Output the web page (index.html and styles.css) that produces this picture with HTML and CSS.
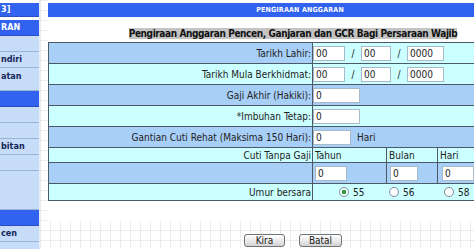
FILE: index.html
```html
<!DOCTYPE html>
<html lang="ms">
<head>
    <meta charset="UTF-8">
    <title>Pengiraan Anggaran</title>
    <link rel="stylesheet" href="styles.css">
</head>
<body>
    <div class="page">
        <div class="sidebar">
            <div class="nav-item nav-head first">3]</div>
            <div class="nav-item nav-head">RAN</div>
            <div class="nav-item"></div>
            <div class="nav-item">ndiri</div>
            <div class="nav-item tall">atan</div>
            <div class="nav-item nav-head"></div>
            <div class="nav-item"></div>
            <div class="nav-item"></div>
            <div class="nav-item">bitan</div>
            <div class="nav-item"></div>
            <div class="nav-item taller"></div>
            <div class="nav-item nav-head"></div>
            <div class="nav-item">cen</div>
            <div class="nav-item"></div>
        </div>

        <div class="content">
            <div class="panel">
                <div class="bar">PENGIRAAN ANGGARAN</div>
                <div class="title"><span>Pengiraan Anggaran Pencen, Ganjaran dan GCR Bagi Persaraan Wajib</span></div>

                <table class="form">
                    <colgroup>
                        <col class="col-label">
                        <col class="col-a">
                        <col class="col-b">
                        <col class="col-c">
                    </colgroup>
                    <tr class="row-dark-label">
                        <td class="label">Tarikh Lahir:</td>
                        <td colspan="3" class="value">
                            <input class="field w32" value="00"><span class="slash">/</span><input class="field w30" value="00"><span class="slash">/</span><input class="field w37" value="0000">
                        </td>
                    </tr>
                    <tr class="row-light">
                        <td class="label">Tarikh Mula Berkhidmat:</td>
                        <td colspan="3" class="value">
                            <input class="field w32" value="00"><span class="slash">/</span><input class="field w30" value="00"><span class="slash">/</span><input class="field w37" value="0000">
                        </td>
                    </tr>
                    <tr class="row-dark">
                        <td class="label">Gaji Akhir (Hakiki):</td>
                        <td colspan="3" class="value"><input class="field w47" value="0"></td>
                    </tr>
                    <tr class="row-light">
                        <td class="label">*Imbuhan Tetap:</td>
                        <td colspan="3" class="value"><input class="field w47" value="0"></td>
                    </tr>
                    <tr class="row-dark">
                        <td class="label">Gantian Cuti Rehat (Maksima 150 Hari):</td>
                        <td colspan="3" class="value"><input class="field w38" value="0"><span class="unit">Hari</span></td>
                    </tr>
                    <tr class="row-light short">
                        <td class="label">Cuti Tanpa Gaji</td>
                        <td class="sub">Tahun</td>
                        <td class="sub">Bulan</td>
                        <td class="sub">Hari</td>
                    </tr>
                    <tr class="row-dark">
                        <td class="label"></td>
                        <td class="sub"><input class="field w32" value="0"></td>
                        <td class="sub pad3"><input class="field w28" value="0"></td>
                        <td class="sub pad4"><input class="field w32" value="0"></td>
                    </tr>
                    <tr class="row-light radios">
                        <td class="label">Umur bersara</td>
                        <td colspan="3">
                            <div class="choices">
                                <label class="choice wide50"><input type="radio" name="umur" checked>55</label>
                                <label class="choice wide55"><input type="radio" name="umur">56</label>
                                <label class="choice"><input type="radio" name="umur">58</label>
                            </div>
                        </td>
                    </tr>
                </table>
            </div>

            <div class="actions">
                <button class="btn kira">Kira</button>
                <button class="btn batal">Batal</button>
            </div>
        </div>
    </div>
</body>
</html>
```

FILE: styles.css
```css
:root {
    --head-blue: #3162f0;
    --side-light: #c6dcf8;
    --row-dark: #a8cff8;
    --row-light: #ccffff;
    --rule: #4c5a68;
}

html,
body {
    margin: 0;
    padding: 0;
    overflow: hidden;
}

body {
    background-color: #ffffff;
    background-image:
        linear-gradient(#ececec 1px, transparent 1px),
        linear-gradient(90deg, #ececec 1px, transparent 1px);
    background-size: 10px 10px;
    font-family: "DejaVu Sans Condensed", "Liberation Sans", sans-serif;
    font-size: 10px;
    color: #222222;
}

.page {
    display: flex;
    align-items: flex-start;
    width: 560px;
}

/* left menu, scrolled off to the left */
.sidebar {
    width: 39px;
    flex-shrink: 0;
    border-right: 1px solid #e8eef8;
    background: #ffffff;
    padding-top: 3px;
}

.nav-item {
    height: 15px;
    line-height: 15px;
    border-bottom: 1px solid #9cb4d4;
    background: var(--side-light);
    color: #13265a;
    font-size: 9px;
    font-weight: bold;
    white-space: nowrap;
    overflow: hidden;
    padding-left: 1px;
}

.nav-head {
    background: var(--head-blue);
    color: #ffffff;
    border-bottom-color: #2a4fc0;
}

.nav-head.first {
    height: 13px;
    line-height: 13px;
    margin-bottom: 3px;
}

.nav-item.tall {
    height: 22px;
    line-height: 17px;
}

.nav-item.taller {
    height: 38px;
}

.content {
    margin-left: 8px;
}

.panel {
    width: 490px;
    background: #ffffff;
    padding-top: 3px;
    padding-bottom: 20px;
}

.bar {
    height: 14px;
    line-height: 14px;
    background: var(--head-blue);
    color: #ffffff;
    font-size: 7px;
    font-weight: bold;
    letter-spacing: 0.2px;
    text-align: center;
    padding-left: 14px;
}

.title {
    margin: 11px 0 2px;
    text-align: center;
    font-size: 10px;
    line-height: 12px;
    font-weight: bold;
    letter-spacing: -0.4px;
    color: #111111;
}

.title span {
    background: #c4c4c4;
}

.form {
    width: 490px;
    table-layout: fixed;
    border-collapse: collapse;
    border: 1px solid var(--rule);
}

.col-label { width: 264px; }
.col-a { width: 74px; }
.col-b { width: 51px; }
.col-c { width: 101px; }

.form td {
    border-top: 1px solid var(--rule);
    border-bottom: 1px solid var(--rule);
    padding: 0;
    height: 20px;
    white-space: nowrap;
}

.form td.label {
    text-align: right;
    padding-right: 1px;
    border-right: 1px solid var(--rule);
}

.form tr.short td {
    height: 14px;
}

.form tr.radios td {
    height: 16px;
}

.row-dark td { background: var(--row-dark); }
.row-light td { background: var(--row-light); }
.row-dark-label td { background: var(--row-light); }
.row-dark-label td.label { background: var(--row-dark); }

.value {
    padding-left: 1px;
}

.form td.sub {
    border-right: 1px solid var(--rule);
    padding-left: 2px;
}

.form td.sub.pad3 { padding-left: 3px; }
.form td.sub.pad4 { padding-left: 4px; }

.field {
    box-sizing: border-box;
    height: 15px;
    border: 1px solid #a9b9c9;
    background: #ffffff;
    font-family: inherit;
    font-size: 10px;
    color: #222222;
    padding: 0 2px;
    margin: 0;
    vertical-align: middle;
}

.w28 { width: 28px; }
.w30 { width: 30px; }
.w32 { width: 32px; }
.w37 { width: 37px; }
.w38 { width: 38px; }
.w47 { width: 47px; }

.slash {
    display: inline-block;
    width: 16px;
    text-align: center;
    vertical-align: middle;
}

.unit {
    margin-left: 6px;
    vertical-align: middle;
}

.choices {
    display: flex;
    align-items: center;
    padding-left: 26px;
}

.choice {
    display: flex;
    align-items: center;
    gap: 4px;
    font-size: 10px;
}

.wide50 { width: 50px; }
.wide55 { width: 55px; }

.choice input {
    appearance: none;
    margin: 0;
    width: 10px;
    height: 10px;
    border: 1px solid #7b8b9b;
    border-radius: 50%;
    background: #ffffff;
}

.choice input:checked {
    background: radial-gradient(circle, #2f9a3a 0 2px, #ffffff 2.5px);
}

.actions {
    width: 490px;
    display: flex;
    justify-content: center;
    gap: 14px;
    padding-top: 13px;
}

.btn {
    height: 13px;
    padding: 0;
    border: 1px solid #6f7479;
    border-radius: 3px;
    background: linear-gradient(#ffffff, #e6e6e6 60%, #d2d2d2);
    font-family: inherit;
    font-size: 10px;
    line-height: 11px;
    color: #222222;
}

.kira { width: 41px; }
.batal { width: 43px; }
```
